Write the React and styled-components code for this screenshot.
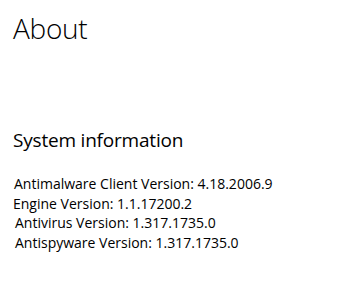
import React from 'react'
import styled, { createGlobalStyle } from 'styled-components'

const GlobalStyle = createGlobalStyle`
    body {
        margin: 0;
        background: #ffffff;
        font-family: "Segoe UI", "Open Sans", "Noto Sans", sans-serif;
        color: #000000;
    }
`

const Page = styled.div`
    width: 340px;
    height: 291px;
    padding: 10px 0 0 13px;
    box-sizing: border-box;
`

const Title = styled.h1`
    margin: 0;
    font-weight: 300;
    font-size: 28px;
    line-height: 36px;
    letter-spacing: -0.3px;
`

const SectionTitle = styled.h2`
    margin: 82px 0 0;
    font-weight: 400;
    font-size: 19px;
    line-height: 24px;
    letter-spacing: -0.2px;
`

const InfoList = styled.div`
    margin-top: 22px;
    display: flex;
    flex-direction: column;
`

const InfoLine = styled.div`
    font-size: 14px;
    line-height: 19.5px;
    padding-left: ${({ indent }) => indent}px;
`

const lines = [
    { text: 'Antimalware Client Version: 4.18.2006.9', indent: 1 },
    { text: 'Engine Version: 1.1.17200.2', indent: 0 },
    { text: 'Antivirus Version: 1.317.1735.0', indent: 2 },
    { text: 'Antispyware Version: 1.317.1735.0', indent: 2 },
]

export default function App() {
    return (
        <>
            <GlobalStyle />
            <Page>
                <Title>About</Title>
                <SectionTitle>System information</SectionTitle>
                <InfoList>
                    {lines.map((l) => (
                        <InfoLine key={l.text} indent={l.indent}>
                            {l.text}
                        </InfoLine>
                    ))}
                </InfoList>
            </Page>
        </>
    )
}
